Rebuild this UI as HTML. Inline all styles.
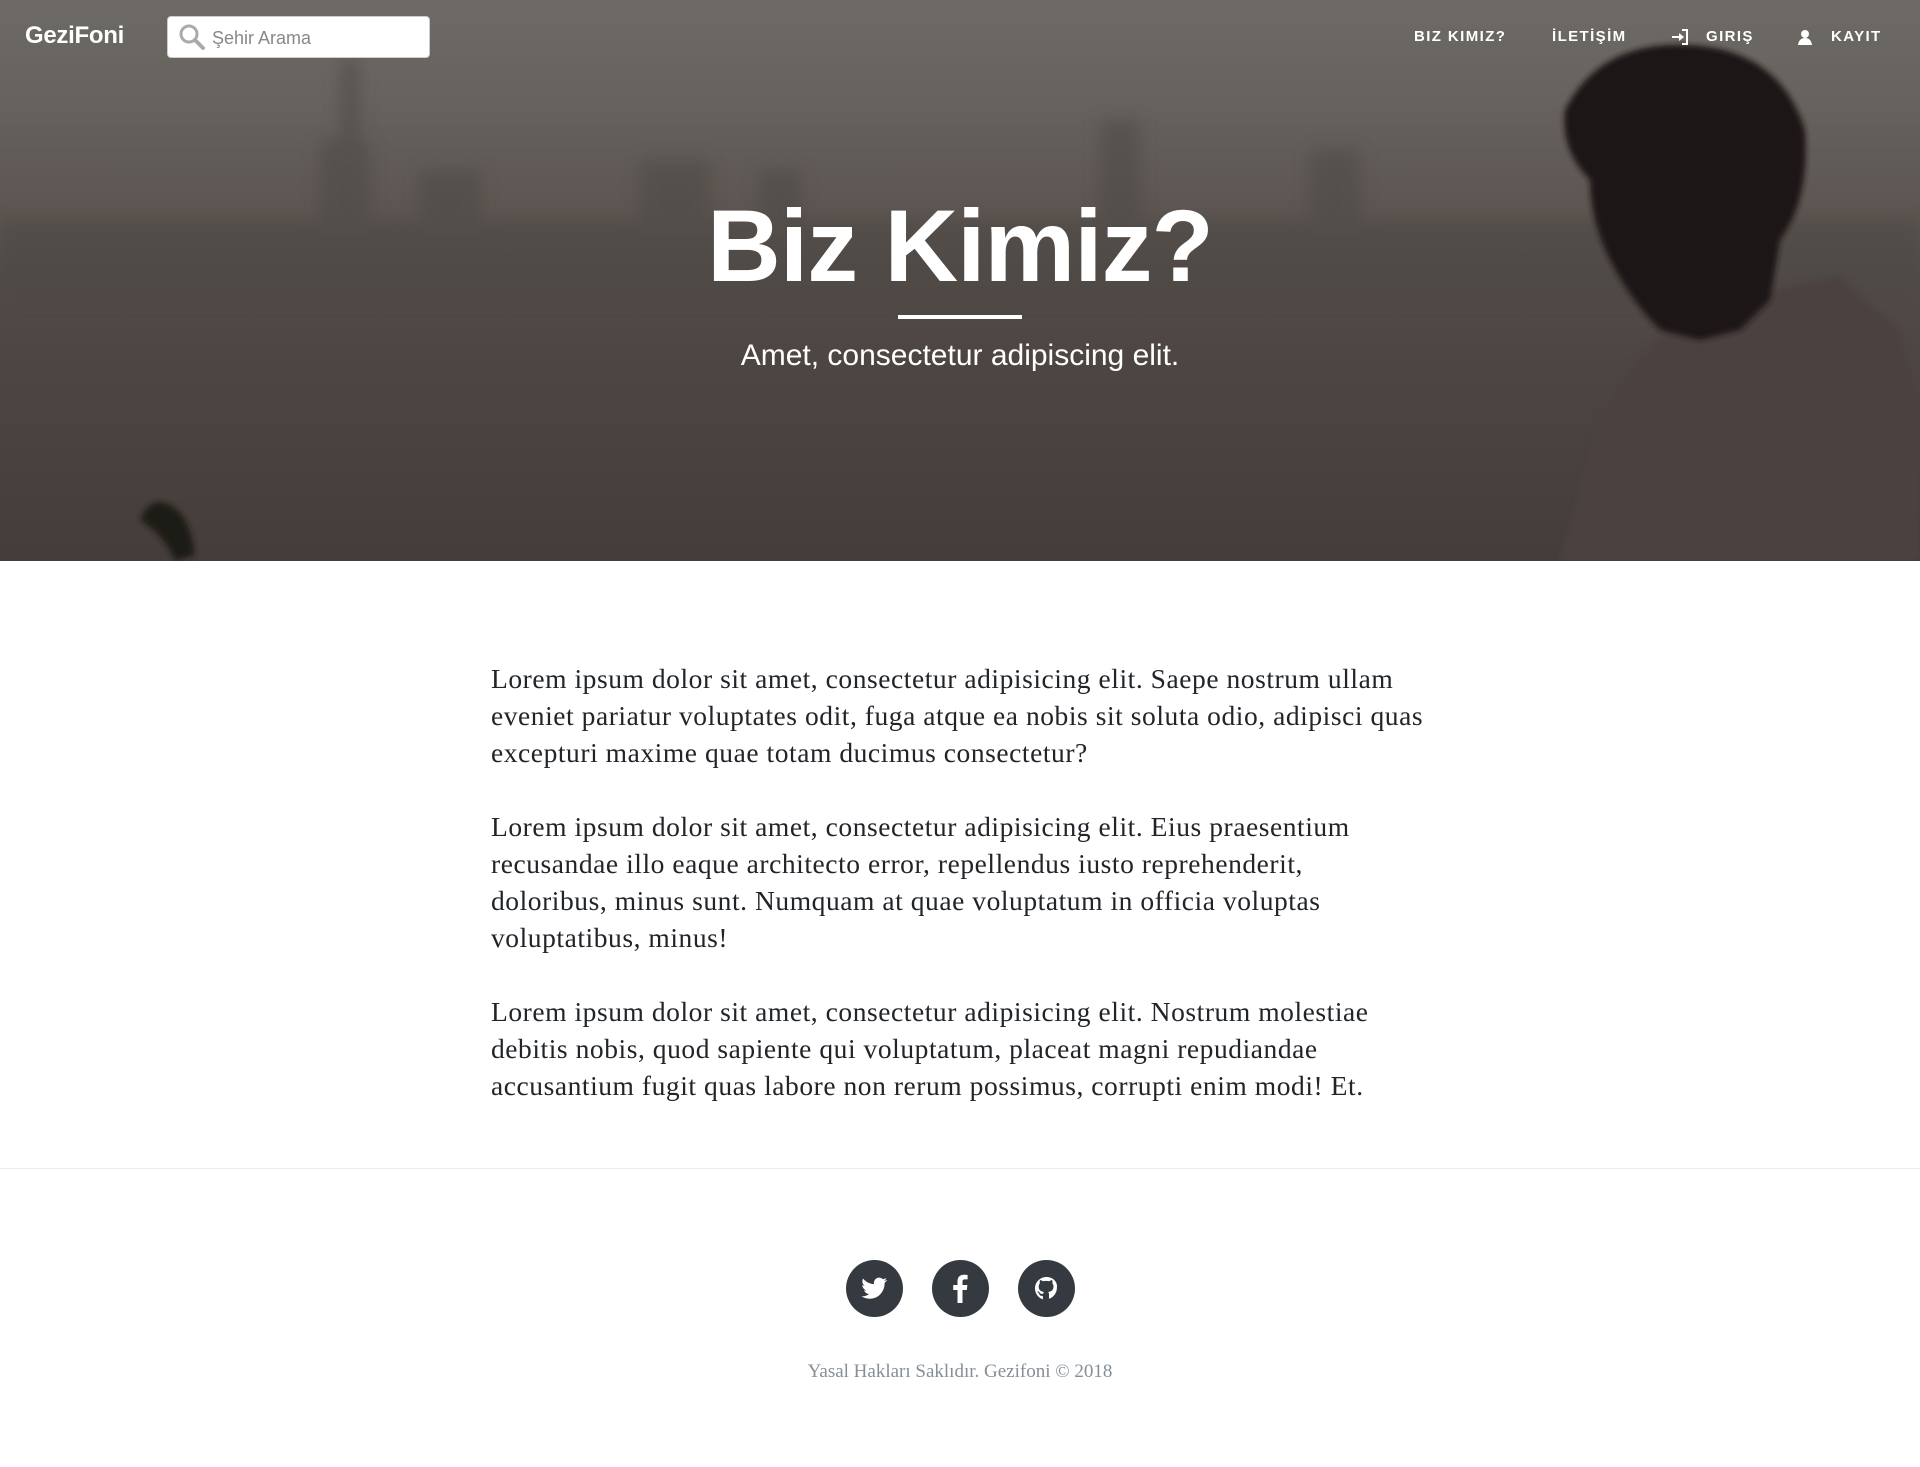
<!DOCTYPE html>
<html><head><meta charset="utf-8">
<style>
*{margin:0;padding:0;box-sizing:border-box}
body{width:1920px;height:1467px;background:#fff;font-family:"Liberation Sans",sans-serif;position:relative;overflow:hidden}
.hero{position:absolute;left:0;top:0;width:1920px;height:561px;overflow:hidden;background:linear-gradient(180deg,#6d6a65 0%,#67625e 18%,#5c5551 38%,#524b48 50%,#4d4643 62%,#443d3a 100%)}
.abs{position:absolute}
.logo{left:25px;top:22px;color:#fff;font-weight:bold;font-size:24px;letter-spacing:-0.3px}
.search{left:167px;top:16px;width:263px;height:42px;background:#fff;border-radius:4px;border:1px solid #ccc}
.search span{position:absolute;left:44px;top:11px;font-size:18px;color:#888}
.nav{top:28px;color:#fff;font-weight:bold;font-size:15px;letter-spacing:1.4px}
h1{position:absolute;left:0;width:1920px;top:188px;text-align:center;color:#fff;font-size:102px;font-weight:bold;letter-spacing:-1px}
.div{left:898px;top:315px;width:124px;height:4px;background:#fff}
.sub{left:0;width:1920px;top:339px;text-align:center;color:#fff;font-size:30px}
.content{position:absolute;left:491px;top:660px;width:1000px;white-space:nowrap;font-family:"Liberation Serif",serif;font-size:27.5px;letter-spacing:0.55px;line-height:37px;color:#212529}
.content p{margin-bottom:37px}
.hr{left:0;top:1168px;width:1920px;height:1px;background:#e9ecef}
.circ{top:1260px;width:57px;height:57px;border-radius:50%;background:#343a40}
.foot{left:0;width:1920px;top:1361px;text-align:center;font-family:"Liberation Serif",serif;font-size:19px;color:#868e96}
</style></head><body>
<div class="hero">
<svg class="abs" style="left:0;top:0" width="1920" height="561">
<defs><filter id="b"><feGaussianBlur stdDeviation="8"/></filter><filter id="b2"><feGaussianBlur stdDeviation="3"/></filter></defs>
<g fill="#4e4845" opacity="0.55" filter="url(#b)">
<rect x="0" y="220" width="1920" height="80"/>
<rect x="320" y="140" width="50" height="160"/><rect x="340" y="60" width="20" height="120"/>
<rect x="420" y="170" width="60" height="130"/><rect x="640" y="160" width="70" height="140"/>
<rect x="760" y="170" width="40" height="130"/><rect x="1100" y="120" width="40" height="180"/>
<rect x="1310" y="150" width="50" height="150"/>
</g>
<path d="M140 520 q10-25 30-15 q20 10 25 50 l-20 6 q-10-25-35-41z" fill="#1e1a18" filter="url(#b2)"/>
<path d="M1560 561 L1600 420 Q1640 330 1720 300 L1840 275 L1900 330 L1920 400 L1920 561Z" fill="#4c4340" filter="url(#b2)"/>
<path d="M1565 110 Q1600 40 1690 45 Q1780 50 1805 130 Q1810 200 1780 240 L1770 300 L1740 330 L1700 340 L1660 330 Q1630 300 1610 260 Q1590 220 1590 180 Q1560 150 1565 110Z" fill="#1a1614" filter="url(#b2)"/>
</svg>
<div class="abs logo">GeziFoni</div>
<div class="abs search"><svg class="abs" style="left:8px;top:4px" width="32" height="32" viewBox="0 0 32 32"><circle cx="13" cy="13" r="8" fill="none" stroke="#aaa" stroke-width="3"/><path d="M19 19 L27 27" stroke="#aaa" stroke-width="4" stroke-linecap="round"/></svg><span>Şehir Arama</span></div>
<div class="abs nav" style="left:1414px">BIZ KIMIZ?</div>
<div class="abs nav" style="left:1552px">İLETİŞİM</div>
<svg class="abs" style="left:1672px;top:29px" width="18" height="16" viewBox="0 0 18 16"><path d="M0 7h7V4l5 4-5 4V9H0z" fill="#fff"/><path d="M10 1h5v14h-5" fill="none" stroke="#fff" stroke-width="2"/></svg>
<div class="abs nav" style="left:1706px">GIRIŞ</div>
<svg class="abs" style="left:1797px;top:29px" width="16" height="16" viewBox="0 0 16 16"><circle cx="8" cy="5" r="4" fill="#fff"/><path d="M1 16 Q2 9 8 9 Q14 9 15 16z" fill="#fff"/></svg>
<div class="abs nav" style="left:1831px">KAYIT</div>
<h1>Biz Kimiz?</h1>
<div class="abs div"></div>
<div class="abs sub">Amet, consectetur adipiscing elit.</div>
</div>
<div class="content">
<p>Lorem ipsum dolor sit amet, consectetur adipisicing elit. Saepe nostrum ullam<br>eveniet pariatur voluptates odit, fuga atque ea nobis sit soluta odio, adipisci quas<br>excepturi maxime quae totam ducimus consectetur?</p>
<p>Lorem ipsum dolor sit amet, consectetur adipisicing elit. Eius praesentium<br>recusandae illo eaque architecto error, repellendus iusto reprehenderit,<br>doloribus, minus sunt. Numquam at quae voluptatum in officia voluptas<br>voluptatibus, minus!</p>
<p>Lorem ipsum dolor sit amet, consectetur adipisicing elit. Nostrum molestiae<br>debitis nobis, quod sapiente qui voluptatum, placeat magni repudiandae<br>accusantium fugit quas labore non rerum possimus, corrupti enim modi! Et.</p>
</div>
<div class="abs hr"></div>
<div class="abs circ" style="left:846px"><svg width="57" height="57" viewBox="0 0 57 57"><path d="M41 20c-1 .5-2 .8-3 .9 1-.7 2-1.7 2.3-2.9-1 .6-2.1 1-3.3 1.3a5.3 5.3 0 0 0-9 4.8c-4.4-.2-8.3-2.3-10.9-5.5-1.5 2.5-.6 5.6 1.6 7.1-.9 0-1.7-.3-2.4-.7 0 2.6 1.8 4.8 4.2 5.2-.8.2-1.6.3-2.4.1.7 2.1 2.7 3.7 5 3.7-2.2 1.8-5 2.6-7.8 2.3 2.4 1.5 5.2 2.4 8.2 2.4 9.9 0 15.4-8.4 15.1-16 1-.7 1.9-1.6 2.6-2.6z" fill="#fff"/></svg></div>
<div class="abs circ" style="left:932px"><svg width="57" height="57" viewBox="0 0 57 57"><path d="M30.5 43V30h4.3l.6-5h-4.9v-3.2c0-1.4.4-2.4 2.5-2.4h2.6V15c-.5-.1-2-.2-3.8-.2-3.8 0-6.3 2.3-6.3 6.5V25H21.2v5h4.3v13z" fill="#fff"/></svg></div>
<div class="abs circ" style="left:1018px"><svg width="57" height="57" viewBox="0 0 57 57"><path d="M28.5 17c-6.4 0-11.5 5.1-11.5 11.5 0 5.1 3.3 9.4 7.9 10.9v-3.5c-2.5.3-3.4-1-3.6-1.8-.2-.5-.8-1.6-1.4-1.9-.4-.3-1-.8 0-.8.9 0 1.6.9 1.8 1.2 1.1 1.8 2.8 1.3 3.5 1 .1-.8.4-1.3.8-1.6-2.6-.3-5.3-1.3-5.3-5.7 0-1.3.5-2.3 1.2-3.1-.1-.3-.5-1.5.1-3.1 0 0 1-.3 3.2 1.2a10.8 10.8 0 0 1 5.8 0c2.2-1.5 3.2-1.2 3.2-1.2.6 1.6.2 2.8.1 3.1.7.8 1.2 1.8 1.2 3.1 0 4.4-2.7 5.4-5.3 5.7.4.4.8 1.1.8 2.2v4.6c4.6-1.5 7.9-5.8 7.9-10.9C40 22.1 34.9 17 28.5 17z" fill="#fff"/></svg></div>
<div class="abs foot">Yasal Hakları Saklıdır. Gezifoni © 2018</div>
</body></html>
